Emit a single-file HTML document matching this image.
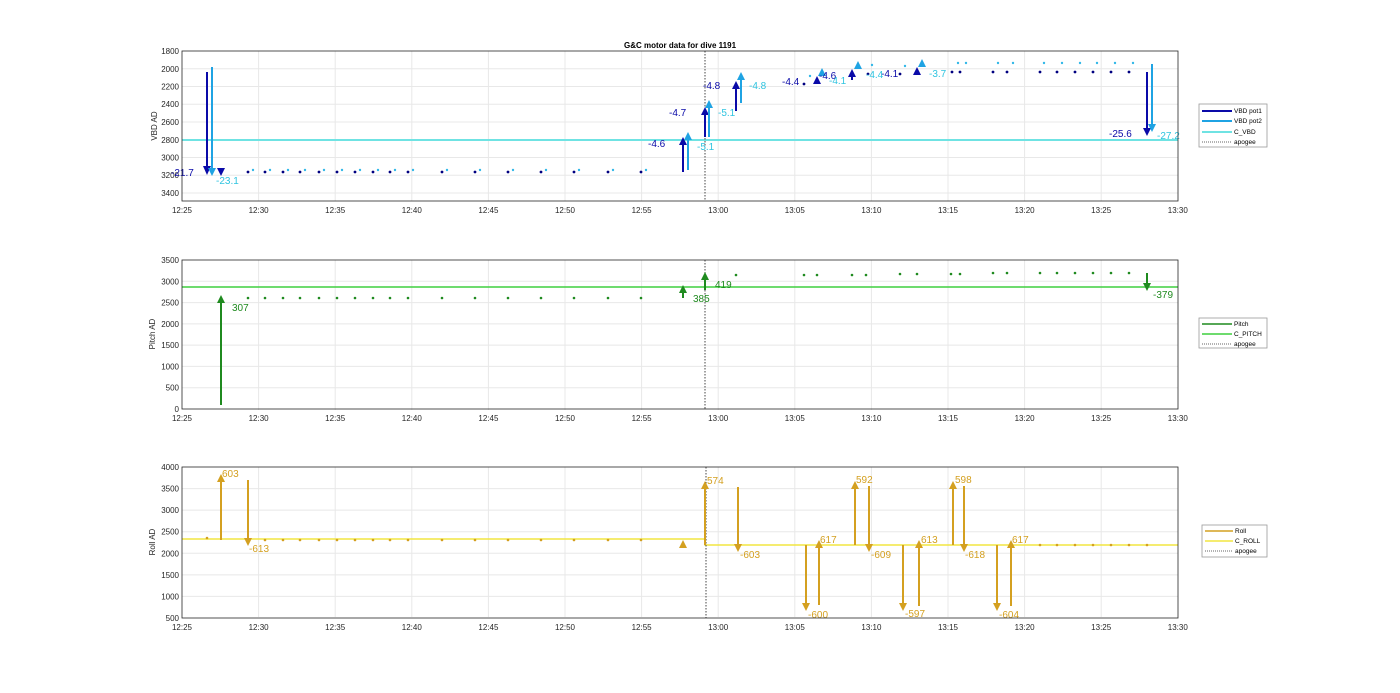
<!DOCTYPE html>
<html><head><meta charset="utf-8"><style>
html,body{margin:0;padding:0;background:#fff;width:1400px;height:693px;overflow:hidden}
svg{display:block;font-family:"Liberation Sans",Arial,sans-serif}
.tk{font-size:8px;fill:#262626}
.g{stroke:#e8e8e8;stroke-width:1}
.ax{fill:none;stroke:#262626;stroke-width:0.8}
.lb{font-size:10px}
</style></head><body>
<svg width="1400" height="693" viewBox="0 0 1400 693">
<defs>
<g id="xg">
<line class="g" x1="258.6" y1="0" x2="258.6" y2="150"/><line class="g" x1="335.2" y1="0" x2="335.2" y2="150"/><line class="g" x1="411.8" y1="0" x2="411.8" y2="150"/><line class="g" x1="488.4" y1="0" x2="488.4" y2="150"/><line class="g" x1="565" y1="0" x2="565" y2="150"/><line class="g" x1="641.6" y1="0" x2="641.6" y2="150"/><line class="g" x1="718.2" y1="0" x2="718.2" y2="150"/><line class="g" x1="794.8" y1="0" x2="794.8" y2="150"/><line class="g" x1="871.4" y1="0" x2="871.4" y2="150"/><line class="g" x1="948" y1="0" x2="948" y2="150"/><line class="g" x1="1024.6" y1="0" x2="1024.6" y2="150"/><line class="g" x1="1101.2" y1="0" x2="1101.2" y2="150"/>
</g>
<g id="xl" class="tk" text-anchor="middle">
<text x="182" y="0">12:25</text><text x="258.6" y="0">12:30</text><text x="335.2" y="0">12:35</text><text x="411.8" y="0">12:40</text><text x="488.4" y="0">12:45</text><text x="565" y="0">12:50</text><text x="641.6" y="0">12:55</text><text x="718.2" y="0">13:00</text><text x="794.8" y="0">13:05</text><text x="871.4" y="0">13:10</text><text x="948" y="0">13:15</text><text x="1024.6" y="0">13:20</text><text x="1101.2" y="0">13:25</text><text x="1177.8" y="0">13:30</text>
</g>
</defs>

<text x="680" y="48" text-anchor="middle" font-size="8" font-weight="bold" fill="#000">G&amp;C motor data for dive 1191</text>

<!-- PLOT 1 -->
<use href="#xg" y="51"/>
<g class="g">
<line x1="182" y1="68.75" x2="1178" y2="68.75"/><line x1="182" y1="86.5" x2="1178" y2="86.5"/><line x1="182" y1="104.25" x2="1178" y2="104.25"/><line x1="182" y1="122" x2="1178" y2="122"/><line x1="182" y1="139.75" x2="1178" y2="139.75"/><line x1="182" y1="157.5" x2="1178" y2="157.5"/><line x1="182" y1="175.25" x2="1178" y2="175.25"/><line x1="182" y1="193" x2="1178" y2="193"/>
</g>
<g class="tk" text-anchor="end">
<text x="179" y="54">1800</text><text x="179" y="72">2000</text><text x="179" y="89.5">2200</text><text x="179" y="107">2400</text><text x="179" y="125">2600</text><text x="179" y="143">2800</text><text x="179" y="160.5">3000</text><text x="179" y="178">3200</text><text x="179" y="196">3400</text>
</g>
<text class="tk" transform="translate(157,126) rotate(-90)" text-anchor="middle">VBD AD</text>
<use href="#xl" y="213"/>
<line x1="182" y1="140" x2="1178" y2="140" stroke="#6fe3e3" stroke-width="2"/>
<line x1="705" y1="51" x2="705" y2="201" stroke="#444" stroke-width="1" stroke-dasharray="1.5,1.5"/>
<!-- dots -->
<g fill="#000080">
<circle cx="248" cy="172" r="1.4"/><circle cx="265" cy="172" r="1.4"/><circle cx="283" cy="172" r="1.4"/><circle cx="300" cy="172" r="1.4"/><circle cx="319" cy="172" r="1.4"/><circle cx="337" cy="172" r="1.4"/><circle cx="355" cy="172" r="1.4"/><circle cx="373" cy="172" r="1.4"/><circle cx="390" cy="172" r="1.4"/><circle cx="408" cy="172" r="1.4"/><circle cx="442" cy="172" r="1.4"/><circle cx="475" cy="172" r="1.4"/><circle cx="508" cy="172" r="1.4"/><circle cx="541" cy="172" r="1.4"/><circle cx="574" cy="172" r="1.4"/><circle cx="608" cy="172" r="1.4"/><circle cx="641" cy="172" r="1.4"/>
<circle cx="804" cy="84" r="1.4"/><circle cx="868" cy="74" r="1.4"/><circle cx="900" cy="74" r="1.4"/>
<circle cx="952" cy="72" r="1.4"/><circle cx="960" cy="72" r="1.4"/><circle cx="993" cy="72" r="1.4"/><circle cx="1007" cy="72" r="1.4"/><circle cx="1040" cy="72" r="1.4"/><circle cx="1057" cy="72" r="1.4"/><circle cx="1075" cy="72" r="1.4"/><circle cx="1093" cy="72" r="1.4"/><circle cx="1111" cy="72" r="1.4"/><circle cx="1129" cy="72" r="1.4"/>
</g>
<g fill="#33b8e8">
<circle cx="253" cy="170" r="1.2"/><circle cx="270" cy="170" r="1.2"/><circle cx="288" cy="170" r="1.2"/><circle cx="305" cy="170" r="1.2"/><circle cx="324" cy="170" r="1.2"/><circle cx="342" cy="170" r="1.2"/><circle cx="360" cy="170" r="1.2"/><circle cx="378" cy="170" r="1.2"/><circle cx="395" cy="170" r="1.2"/><circle cx="413" cy="170" r="1.2"/><circle cx="447" cy="170" r="1.2"/><circle cx="480" cy="170" r="1.2"/><circle cx="513" cy="170" r="1.2"/><circle cx="546" cy="170" r="1.2"/><circle cx="579" cy="170" r="1.2"/><circle cx="613" cy="170" r="1.2"/><circle cx="646" cy="170" r="1.2"/>
<circle cx="810" cy="76" r="1.2"/><circle cx="872" cy="65" r="1.2"/><circle cx="905" cy="66" r="1.2"/>
<circle cx="958" cy="63" r="1.2"/><circle cx="966" cy="63" r="1.2"/><circle cx="998" cy="63" r="1.2"/><circle cx="1013" cy="63" r="1.2"/><circle cx="1044" cy="63" r="1.2"/><circle cx="1062" cy="63" r="1.2"/><circle cx="1080" cy="63" r="1.2"/><circle cx="1097" cy="63" r="1.2"/><circle cx="1115" cy="63" r="1.2"/><circle cx="1133" cy="63" r="1.2"/>
</g>
<!-- dark arrows -->
<g stroke="#0a0aa8" stroke-width="2" fill="none">
<line x1="207" y1="72" x2="207" y2="166"/>
<line x1="683" y1="172" x2="683" y2="144"/>
<line x1="705" y1="137" x2="705" y2="114"/>
<line x1="736" y1="111" x2="736" y2="88"/>
<line x1="852" y1="80" x2="852" y2="76"/>
<line x1="1147" y1="72" x2="1147" y2="128"/>
</g>
<g fill="#0a0aa8">
<polygon points="203,166 211,166 207,175"/>
<polygon points="217,168 225,168 221,176"/>
<polygon points="679,145 687,145 683,137"/>
<polygon points="701,115 709,115 705,107"/>
<polygon points="732,89 740,89 736,81"/>
<polygon points="813,84 821,84 817,76"/>
<polygon points="848,77 856,77 852,69"/>
<polygon points="913,75 921,75 917,67"/>
<polygon points="1143,128 1151,128 1147,136"/>
</g>
<g stroke="#1fa3e3" stroke-width="2" fill="none">
<line x1="212" y1="67" x2="212" y2="168"/>
<line x1="688" y1="170" x2="688" y2="139"/>
<line x1="709" y1="137" x2="709" y2="107"/>
<line x1="741" y1="103" x2="741" y2="79"/>
<line x1="1152" y1="64" x2="1152" y2="124"/>
</g>
<g fill="#1fa3e3">
<polygon points="208,168 216,168 212,176"/>
<polygon points="684,140 692,140 688,132"/>
<polygon points="705,108 713,108 709,100"/>
<polygon points="737,80 745,80 741,72"/>
<polygon points="818,76 826,76 822,68"/>
<polygon points="854,69 862,69 858,61"/>
<polygon points="918,67 926,67 922,59"/>
<polygon points="1148,124 1156,124 1152,132"/>
</g>
<g class="lb" fill="#0a0aa8">
<text x="171" y="176">-21.7</text><text x="648" y="147">-4.6</text><text x="669" y="116">-4.7</text><text x="703" y="89">-4.8</text><text x="782" y="85">-4.4</text><text x="819" y="79">-4.6</text><text x="881" y="77">-4.1</text><text x="1109" y="137">-25.6</text>
</g>
<g class="lb" fill="#2fc4e0">
<text x="216" y="184">-23.1</text><text x="697" y="150">-5.1</text><text x="718" y="116">-5.1</text><text x="749" y="89">-4.8</text><text x="829" y="84">-4.1</text><text x="866" y="78">-4.4</text><text x="929" y="77">-3.7</text><text x="1157" y="139">-27.2</text>
</g>
<rect class="ax" x="182" y="51" width="996" height="150"/>
<!-- legend 1 -->
<rect x="1199" y="104" width="68" height="43" fill="#fff" stroke="#999" stroke-width="0.8"/>
<g font-size="6.5" fill="#000">
<line x1="1202" y1="111" x2="1232" y2="111" stroke="#0a0aa8" stroke-width="2"/><text x="1234" y="113">VBD pot1</text>
<line x1="1202" y1="121" x2="1232" y2="121" stroke="#1fa3e3" stroke-width="2"/><text x="1234" y="123">VBD pot2</text>
<line x1="1202" y1="132" x2="1232" y2="132" stroke="#6fe3e3" stroke-width="2"/><text x="1234" y="134">C_VBD</text>
<line x1="1202" y1="142" x2="1232" y2="142" stroke="#333" stroke-width="0.8" stroke-dasharray="1,1"/><text x="1234" y="144">apogee</text>
</g>

<!-- PLOT 2 -->
<use href="#xg" y="260" transform="translate(0,0)"/>
<g class="g">
<line x1="182" y1="281.3" x2="1178" y2="281.3"/><line x1="182" y1="302.6" x2="1178" y2="302.6"/><line x1="182" y1="323.9" x2="1178" y2="323.9"/><line x1="182" y1="345.1" x2="1178" y2="345.1"/><line x1="182" y1="366.4" x2="1178" y2="366.4"/><line x1="182" y1="387.7" x2="1178" y2="387.7"/>
</g>
<g class="tk" text-anchor="end">
<text x="179" y="263">3500</text><text x="179" y="284.3">3000</text><text x="179" y="305.6">2500</text><text x="179" y="326.9">2000</text><text x="179" y="348.1">1500</text><text x="179" y="369.4">1000</text><text x="179" y="390.7">500</text><text x="179" y="412">0</text>
</g>
<text class="tk" transform="translate(155,334) rotate(-90)" text-anchor="middle">Pitch AD</text>
<use href="#xl" y="421"/>
<line x1="182" y1="287" x2="1178" y2="287" stroke="#3fcf3f" stroke-width="1.5"/>
<line x1="705" y1="260" x2="705" y2="409" stroke="#444" stroke-width="1" stroke-dasharray="1.5,1.5"/>
<g fill="#1f8a1f">
<circle cx="248" cy="298" r="1.3"/><circle cx="265" cy="298" r="1.3"/><circle cx="283" cy="298" r="1.3"/><circle cx="300" cy="298" r="1.3"/><circle cx="319" cy="298" r="1.3"/><circle cx="337" cy="298" r="1.3"/><circle cx="355" cy="298" r="1.3"/><circle cx="373" cy="298" r="1.3"/><circle cx="390" cy="298" r="1.3"/><circle cx="408" cy="298" r="1.3"/><circle cx="442" cy="298" r="1.3"/><circle cx="475" cy="298" r="1.3"/><circle cx="508" cy="298" r="1.3"/><circle cx="541" cy="298" r="1.3"/><circle cx="574" cy="298" r="1.3"/><circle cx="608" cy="298" r="1.3"/><circle cx="641" cy="298" r="1.3"/>
<circle cx="736" cy="275" r="1.3"/><circle cx="804" cy="275" r="1.3"/><circle cx="817" cy="275" r="1.3"/><circle cx="852" cy="275" r="1.3"/><circle cx="866" cy="275" r="1.3"/><circle cx="900" cy="274" r="1.3"/><circle cx="917" cy="274" r="1.3"/><circle cx="951" cy="274" r="1.3"/><circle cx="960" cy="274" r="1.3"/><circle cx="993" cy="273" r="1.3"/><circle cx="1007" cy="273" r="1.3"/><circle cx="1040" cy="273" r="1.3"/><circle cx="1057" cy="273" r="1.3"/><circle cx="1075" cy="273" r="1.3"/><circle cx="1093" cy="273" r="1.3"/><circle cx="1111" cy="273" r="1.3"/><circle cx="1129" cy="273" r="1.3"/>
</g>
<g stroke="#1f8a1f" stroke-width="2">
<line x1="221" y1="405" x2="221" y2="302"/>
<line x1="683" y1="298" x2="683" y2="292"/>
<line x1="705" y1="290" x2="705" y2="279"/>
<line x1="1147" y1="273" x2="1147" y2="284"/>
</g>
<g fill="#1f8a1f">
<polygon points="217,303 225,303 221,295"/>
<polygon points="679,293 687,293 683,285"/>
<polygon points="701,280 709,280 705,272"/>
<polygon points="1143,283 1151,283 1147,291"/>
</g>
<g class="lb" fill="#1f8a1f">
<text x="232" y="311">307</text><text x="693" y="302">385</text><text x="715" y="288">419</text><text x="1153" y="298">-379</text>
</g>
<rect class="ax" x="182" y="260" width="996" height="149"/>
<rect x="1199" y="318" width="68" height="30" fill="#fff" stroke="#999" stroke-width="0.8"/>
<g font-size="6.5" fill="#000">
<line x1="1202" y1="324" x2="1232" y2="324" stroke="#1f8a1f" stroke-width="1.5"/><text x="1234" y="326">Pitch</text>
<line x1="1202" y1="334" x2="1232" y2="334" stroke="#3fcf3f" stroke-width="1.5"/><text x="1234" y="336">C_PITCH</text>
<line x1="1202" y1="344" x2="1232" y2="344" stroke="#333" stroke-width="0.8" stroke-dasharray="1,1"/><text x="1234" y="346">apogee</text>
</g>

<!-- PLOT 3 -->
<use href="#xg" y="467"/>
<g class="g">
<line x1="182" y1="488.6" x2="1178" y2="488.6"/><line x1="182" y1="510.1" x2="1178" y2="510.1"/><line x1="182" y1="531.7" x2="1178" y2="531.7"/><line x1="182" y1="553.3" x2="1178" y2="553.3"/><line x1="182" y1="574.9" x2="1178" y2="574.9"/><line x1="182" y1="596.4" x2="1178" y2="596.4"/>
</g>
<g class="tk" text-anchor="end">
<text x="179" y="470">4000</text><text x="179" y="491.6">3500</text><text x="179" y="513.1">3000</text><text x="179" y="534.7">2500</text><text x="179" y="556.3">2000</text><text x="179" y="577.9">1500</text><text x="179" y="599.4">1000</text><text x="179" y="621">500</text>
</g>
<text class="tk" transform="translate(155,542) rotate(-90)" text-anchor="middle">Roll AD</text>
<use href="#xl" y="630"/>
<polyline points="182,539 705,539 705,545 1178,545" fill="none" stroke="#f2e640" stroke-width="1.5"/>
<line x1="706" y1="467" x2="706" y2="618" stroke="#444" stroke-width="1" stroke-dasharray="1.5,1.5"/>
<g fill="#d4a020">
<circle cx="207" cy="538" r="1.3"/><circle cx="265" cy="540" r="1.3"/><circle cx="283" cy="540" r="1.3"/><circle cx="300" cy="540" r="1.3"/><circle cx="319" cy="540" r="1.3"/><circle cx="337" cy="540" r="1.3"/><circle cx="355" cy="540" r="1.3"/><circle cx="373" cy="540" r="1.3"/><circle cx="390" cy="540" r="1.3"/><circle cx="408" cy="540" r="1.3"/><circle cx="442" cy="540" r="1.3"/><circle cx="475" cy="540" r="1.3"/><circle cx="508" cy="540" r="1.3"/><circle cx="541" cy="540" r="1.3"/><circle cx="574" cy="540" r="1.3"/><circle cx="608" cy="540" r="1.3"/><circle cx="641" cy="540" r="1.3"/>
<circle cx="1040" cy="545" r="1.3"/><circle cx="1057" cy="545" r="1.3"/><circle cx="1075" cy="545" r="1.3"/><circle cx="1093" cy="545" r="1.3"/><circle cx="1111" cy="545" r="1.3"/><circle cx="1129" cy="545" r="1.3"/><circle cx="1147" cy="545" r="1.3"/>
</g>
<g stroke="#d4a020" stroke-width="2">
<line x1="221" y1="540" x2="221" y2="481"/><line x1="248" y1="480" x2="248" y2="538"/>
<line x1="705" y1="545" x2="705" y2="488"/><line x1="738" y1="487" x2="738" y2="544"/>
<line x1="806" y1="545" x2="806" y2="603"/><line x1="819" y1="605" x2="819" y2="547"/>
<line x1="855" y1="545" x2="855" y2="488"/><line x1="869" y1="486" x2="869" y2="544"/>
<line x1="903" y1="545" x2="903" y2="603"/><line x1="919" y1="606" x2="919" y2="547"/>
<line x1="953" y1="545" x2="953" y2="488"/><line x1="964" y1="486" x2="964" y2="544"/>
<line x1="997" y1="545" x2="997" y2="603"/><line x1="1011" y1="606" x2="1011" y2="547"/>
</g>
<g fill="#d4a020">
<polygon points="217,482 225,482 221,474"/><polygon points="244,538 252,538 248,546"/>
<polygon points="679,548 687,548 683,540"/>
<polygon points="701,489 709,489 705,481"/><polygon points="734,544 742,544 738,552"/>
<polygon points="802,603 810,603 806,611"/><polygon points="815,548 823,548 819,540"/>
<polygon points="851,489 859,489 855,481"/><polygon points="865,544 873,544 869,552"/>
<polygon points="899,603 907,603 903,611"/><polygon points="915,548 923,548 919,540"/>
<polygon points="949,489 957,489 953,481"/><polygon points="960,544 968,544 964,552"/>
<polygon points="993,603 1001,603 997,611"/><polygon points="1007,548 1015,548 1011,540"/>
</g>
<g class="lb" fill="#d4a020">
<text x="222" y="477">603</text><text x="249" y="552">-613</text>
<text x="707" y="484">574</text><text x="740" y="558">-603</text>
<text x="808" y="618">-600</text><text x="820" y="543">617</text>
<text x="856" y="483">592</text><text x="871" y="558">-609</text>
<text x="905" y="617">-597</text><text x="921" y="543">613</text>
<text x="955" y="483">598</text><text x="965" y="558">-618</text>
<text x="999" y="618">-604</text><text x="1012" y="543">617</text>
</g>
<rect class="ax" x="182" y="467" width="996" height="151"/>
<rect x="1202" y="525" width="65" height="32" fill="#fff" stroke="#999" stroke-width="0.8"/>
<g font-size="6.5" fill="#000">
<line x1="1205" y1="531" x2="1233" y2="531" stroke="#d4a020" stroke-width="1.5"/><text x="1235" y="533">Roll</text>
<line x1="1205" y1="541" x2="1233" y2="541" stroke="#f2e640" stroke-width="1.5"/><text x="1235" y="543">C_ROLL</text>
<line x1="1205" y1="551" x2="1233" y2="551" stroke="#333" stroke-width="0.8" stroke-dasharray="1,1"/><text x="1235" y="553">apogee</text>
</g>
</svg>
</body></html>
